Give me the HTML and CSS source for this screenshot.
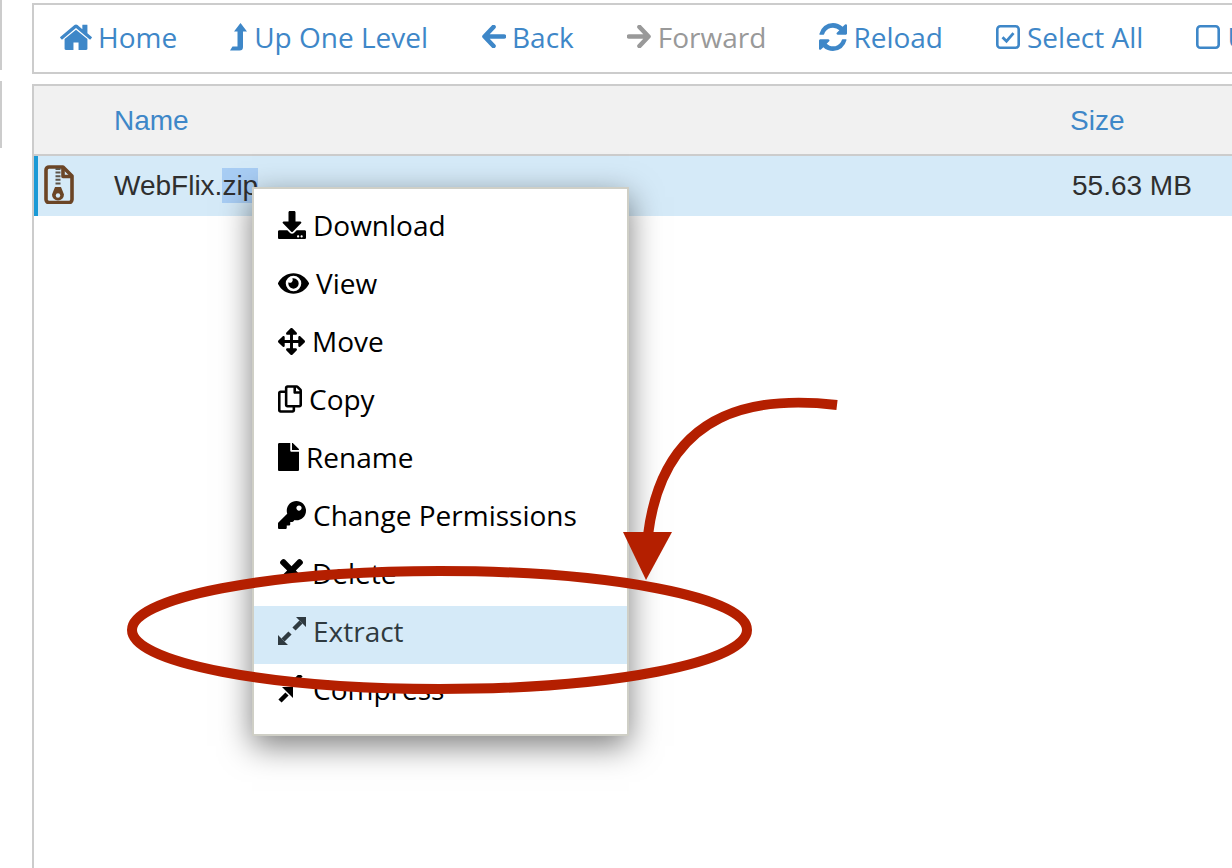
FILE: index.html
```html
<!DOCTYPE html>
<html lang="en">
<head>
<meta charset="utf-8">
<title>File Manager</title>
<link rel="stylesheet" href="styles.css">
</head>
<body>
<div class="page">
  <aside class="rail">
    <div class="stub stub-a"></div>
    <div class="stub stub-b"></div>
  </aside>
  <main class="main">
    <nav class="toolbar">
      <a class="tool"><svg class="ti ti-home" viewBox="96 224 1600 1312"><path d="M1472 992v480q0 26-19 45t-45 19h-384v-384h-256v384h-384q-26 0-45-19t-19-45v-480q0-1 .5-3t.5-3l575-474 575 474q1 2 1 6zm223-69l-62 74q-8 9-21 11h-3q-13 0-21-7l-692-577-692 577q-12 8-24 7-13-2-21-11l-62-74q-8-10-7-23.5t11-21.5l719-599q32-26 76-26t76 26l244 204v-195q0-14 9-23t23-9h192q14 0 23 9t9 23v408l219 182q10 8 11 21.5t-7 23.5z"/></svg>Home</a>
      <a class="tool"><svg class="ti ti-up" viewBox="0 0 17 28"><path d="M10.500 0l6.500 8.500h-4V24q0 3.500-3.500 3.500H0L2.500 23.500H7.500V8.500H4z"/></svg>Up One Level</a>
      <a class="tool"><svg class="ti ti-arrow" viewBox="0 0 25 23"><path class="arrow-line" d="M23 11.500H4M12.500 2L3.500 11.500l9 9.500"/></svg>Back</a>
      <a class="tool tool-off"><svg class="ti ti-arrow" viewBox="0 0 25 23"><path class="arrow-line" d="M2 11.500H21M12.500 2l9 9.500-9 9.500"/></svg>Forward</a>
      <a class="tool"><svg class="ti ti-reload" viewBox="128 128 1536 1536"><path d="M1639 1056q0 5-1 7-64 268-268 434.5t-478 166.5q-146 0-282.5-55t-243.5-157l-129 129q-19 19-45 19t-45-19-19-45v-448q0-26 19-45t45-19h448q26 0 45 19t19 45-19 45l-137 137q71 66 161 102t187 36q134 0 250-65t186-179q11-17 53-117 8-23 30-23h192q13 0 22.5 9.5t9.5 22.5zm25-800v448q0 26-19 45t-45 19h-448q-26 0-45-19t-19-45 19-45l138-138q-148-137-349-137-134 0-250 65t-186 179q-11 17-53 117-8 23-30 23h-199q-13 0-22.5-9.5t-9.5-22.5v-7q65-268 270-434.5t480-166.5q146 0 284 55.5t245 156.5l130-129q19-19 45-19t45 19 19 45z"/></svg>Reload</a>
      <a class="tool"><svg class="ti ti-box" viewBox="0 0 24 24"><rect class="box-line" x="1.300" y="1.300" width="21.400" height="21.400" rx="3"/><path class="check-line" d="M6.500 12.200l4 4 7-8"/></svg>Select All</a>
      <a class="tool"><svg class="ti ti-box" viewBox="0 0 24 24"><rect class="box-line" x="1.300" y="1.300" width="21.400" height="21.400" rx="3"/></svg>Unselect All</a>
    </nav>
    <section class="files">
      <header class="files-head">
        <span class="col-icon"></span>
        <span class="col-name">Name</span>
        <span class="col-size">Size</span>
      </header>
      <div class="file-row">
        <span class="col-icon">
          <svg class="zip" viewBox="0 0 30 39">
            <path class="zip-line" d="M5 2h14l9 9v23.500a3 3 0 0 1-3 3H5a3 3 0 0 1-3-3V5a3 3 0 0 1 3-3z"/>
            <path class="zip-line" d="M19 2.500v9h9"/>
            <path class="zip-teeth" d="M14 3v18"/>
            <path class="zip-pull" d="M11 22h6l3 7.500a6 6 0 1 1-12 0z"/>
            <circle class="zip-hole" cx="14" cy="30.500" r="2.200"/>
          </svg>
        </span>
        <span class="col-name">WebFlix.<span class="selected">zip</span></span>
        <span class="col-size">55.63 MB</span>
      </div>
    </section>
  </main>
</div>

<div class="menu">
  <a class="item"><svg class="mi mi-download" viewBox="0 0 512 512"><path d="M216 0h80c13.300 0 24 10.700 24 24v168h87.700c17.800 0 26.700 21.500 14.100 34.100L269.700 378.300c-7.500 7.500-19.800 7.500-27.300 0L90.100 226.100c-12.600-12.600-3.700-34.100 14.100-34.100H192V24c0-13.300 10.700-24 24-24zm296 376v112c0 13.300-10.700 24-24 24H24c-13.300 0-24-10.700-24-24V376c0-13.300 10.700-24 24-24h146.700l49 49c20.100 20.100 52.500 20.100 72.600 0l49-49H488c13.300 0 24 10.700 24 24zm-124 88c0-11-9-20-20-20s-20 9-20 20 9 20 20 20 20-9 20-20zm64 0c0-11-9-20-20-20s-20 9-20 20 9 20 20 20 20-9 20-20z"/></svg>Download</a>
  <a class="item"><svg class="mi mi-eye" viewBox="0 64 576 384"><path d="M572.520 241.400C518.290 135.590 410.930 64 288 64S57.680 135.640 3.480 241.410a32.350 32.350 0 0 0 0 29.190C57.710 376.410 165.070 448 288 448s230.320-71.640 284.520-177.410a32.350 32.350 0 0 0 0-29.190zM288 400a144 144 0 1 1 144-144 143.930 143.930 0 0 1-144 144zm0-240a95.310 95.310 0 0 0-25.310 3.790 47.850 47.850 0 0 1-66.900 66.900A95.780 95.780 0 1 0 288 160z"/></svg>View</a>
  <a class="item"><svg class="mi mi-move" viewBox="0 0 512 512"><path d="M352.201 425.775l-79.196 79.196c-9.373 9.373-24.568 9.373-33.941 0l-79.196-79.196c-15.119-15.119-4.411-40.971 16.971-40.970h51.162L228 284H127.196v51.162c0 21.382-25.851 32.090-40.971 16.971L7.029 272.937c-9.373-9.373-9.373-24.569 0-33.941L86.225 159.800c15.119-15.119 40.971-4.411 40.971 16.971V228H228V127.196h-51.230c-21.382 0-32.090-25.851-16.971-40.971l79.196-79.196c9.373-9.373 24.568-9.373 33.941 0l79.196 79.196c15.119 15.119 4.411 40.971-16.971 40.971h-51.162V228h100.804v-51.162c0-21.382 25.851-32.090 40.970-16.971l79.196 79.196c9.373 9.373 9.373 24.569 0 33.941L425.773 352.200c-15.119 15.119-40.971 4.411-40.970-16.971V284H284v100.804h51.230c21.382 0 32.090 25.851 16.971 40.971z"/></svg>Move</a>
  <a class="item"><svg class="mi mi-copy" viewBox="0 0 448 512"><path d="M433.941 65.941l-51.882-51.882A48 48 0 0 0 348.118 0H176c-26.510 0-48 21.490-48 48v48H48c-26.510 0-48 21.490-48 48v320c0 26.510 21.490 48 48 48h224c26.510 0 48-21.490 48-48v-48h80c26.510 0 48-21.490 48-48V99.882a48 48 0 0 0-14.059-33.941zM266 464H54a6 6 0 0 1-6-6V150a6 6 0 0 1 6-6h74v224c0 26.510 21.490 48 48 48h96v42a6 6 0 0 1-6 6zm128-96H182a6 6 0 0 1-6-6V54a6 6 0 0 1 6-6h106v88c0 13.255 10.745 24 24 24h88v202a6 6 0 0 1-6 6zm6-256h-64V48h9.632c1.591 0 3.117.632 4.243 1.757l48.368 48.368a6 6 0 0 1 1.757 4.243V112z"/></svg>Copy</a>
  <a class="item"><svg class="mi mi-file" viewBox="0 0 384 512"><path d="M224 136V0H24C10.700 0 0 10.700 0 24v464c0 13.300 10.700 24 24 24h336c13.300 0 24-10.700 24-24V160H248c-13.200 0-24-10.800-24-24zm160-14.100v6.100H256V0h6.100c6.400 0 12.500 2.500 17 7l97.900 98c4.500 4.500 7 10.600 7 16.900z"/></svg>Rename</a>
  <a class="item"><svg class="mi mi-key" viewBox="0 0 512 512"><path d="M512 176.001C512 273.203 433.202 352 336 352c-11.220 0-22.190-1.062-32.827-3.069l-24.012 27.014A23.999 23.999 0 0 1 261.223 384H224v40c0 13.255-10.745 24-24 24h-40v40c0 13.255-10.745 24-24 24H24c-13.255 0-24-10.745-24-24v-78.059c0-6.365 2.529-12.470 7.029-16.971l161.802-161.802C163.108 213.814 160 195.271 160 176 160 78.798 238.797.001 335.999 0 433.488-.001 512 78.511 512 176.001zM336 128c0 26.510 21.490 48 48 48s48-21.490 48-48-21.490-48-48-48-48 21.490-48 48z"/></svg>Change Permissions</a>
  <a class="item"><svg class="mi mi-times" viewBox="0 80 352 352"><path d="M242.720 256l100.070-100.070c12.280-12.280 12.280-32.190 0-44.480l-22.240-22.240c-12.280-12.280-32.190-12.280-44.480 0L176 189.280 75.930 89.210c-12.280-12.280-32.190-12.280-44.480 0L9.210 111.450c-12.280 12.280-12.280 32.190 0 44.480L109.280 256 9.210 356.070c-12.280 12.280-12.280 32.190 0 44.480l22.240 22.240c12.280 12.280 32.200 12.280 44.480 0L176 322.720l100.070 100.070c12.280 12.280 32.200 12.280 44.480 0l22.240-22.240c12.280-12.280 12.280-32.190 0-44.480L242.720 256z"/></svg>Delete</a>
  <a class="item item-on"><svg class="mi mi-expand" viewBox="0 0 28 28"><path class="arrow-fill" d="M0 28V18l10 10zM28 0v10L18 0z"/><path class="diag" d="M5 23l7-7M23 5l-7 7"/></svg>Extract</a>
  <a class="item"><svg class="mi mi-expand" viewBox="0 0 28 28"><path class="arrow-fill" d="M15 12v11L4 12z"/><path class="diag" d="M2 26l7-7M23 0l-6 6"/></svg>Compress</a>
</div>

<svg class="markup" viewBox="0 0 1232 868">
  <ellipse class="mark-line" cx="439.500" cy="630" rx="307.500" ry="59"/>
  <path class="mark-line" d="M837 405C760 396 664 406 648 535"/>
  <path class="mark-fill" d="M623 532h49l-26 48z"/>
</svg>
</body>
</html>
```
FILE: styles.css
```css
* { box-sizing: border-box; }

html, body {
  margin: 0;
  height: 100%;
  overflow: hidden;
  background: #fff;
}

.page {
  display: flex;
  width: 1232px;
  height: 868px;
  overflow: hidden;
}

/* left rail: only the edges of two buttons are visible */
.rail {
  flex: 0 0 32px;
  display: flex;
  flex-direction: column;
  gap: 11px;
}

.stub {
  width: 2px;
  background: #fff;
  border-right: 2px solid #ccc;
}

.stub-a { height: 70px; }
.stub-b { height: 67px; }

.main {
  flex: 1;
  min-width: 0;
  padding-top: 3px;
  display: flex;
  flex-direction: column;
  gap: 10px;
}

.toolbar {
  display: flex;
  align-items: center;
  gap: 53px;
  height: 71px;
  padding: 0 0 4px 26px;
  border: 2px solid #ccc;
  border-right: 0;
  overflow: hidden;
  white-space: nowrap;
  font: 28px/1 "Open Sans", sans-serif;
}

.tool {
  display: flex;
  align-items: center;
  gap: 6px;
  flex: none;
  color: #3e87c8;
}

.tool-off { color: #999; }

.ti { display: block; flex: none; fill: currentColor; }
.ti-home { width: 32px; height: 26px; }
.ti-up { width: 17px; height: 28px; margin-right: 1px; }
.ti-arrow { width: 25px; height: 23px; }
.ti-reload { width: 28px; height: 28px; }
.ti-box { width: 24px; height: 24px; margin-right: 1px; }

.arrow-line {
  fill: none;
  stroke: currentColor;
  stroke-width: 4.600;
  stroke-linecap: round;
  stroke-linejoin: round;
}

.box-line { fill: none; stroke: currentColor; stroke-width: 2.600; }
.check-line { fill: none; stroke: currentColor; stroke-width: 2.800; }

.files {
  flex: 1;
  border-left: 2px solid #ccc;
  border-top: 2px solid #ccc;
  font: 28px/1 "Liberation Sans", Arial, sans-serif;
}

.files-head {
  display: flex;
  align-items: center;
  height: 70px;
  padding-top: 2px;
  background: #f1f1f1;
  border-bottom: 2px solid #ccc;
  color: #3e87c8;
}

.file-row {
  display: flex;
  align-items: center;
  height: 60px;
  background: #d5eaf8;
  border-left: 4px solid #1b9ad6;
  color: #2f2f2f;
}

.col-icon { flex: none; width: 80px; }
.col-name { flex: none; width: 956px; }
.file-row .col-icon { width: 76px; padding-left: 6px; }
.col-size { flex: none; }
.file-row .col-size { margin-left: 2px; }

.selected {
  background: #a8cdf4;
  padding: 2px 0;
}

.zip { display: block; width: 30px; height: 39px; margin-top: -4px; }
.zip-line { fill: none; stroke: #6b4526; stroke-width: 3.600; stroke-linejoin: round; }
.zip-teeth { fill: none; stroke: #5c5348; stroke-width: 5; stroke-dasharray: 2 1.600; }
.zip-pull { fill: #6b4526; }
.zip-hole { fill: #d5eaf8; }

/* context menu */
.menu {
  position: absolute;
  left: 252px;
  top: 187px;
  width: 377px;
  height: 549px;
  padding: 11px 0 0;
  background: #fff;
  border: 2px solid #cfcfc6;
  box-shadow: 0 10px 30px rgba(0, 0, 0, .5);
  font: 28px/1 "Open Sans", sans-serif;
  color: #000;
}

.item {
  display: flex;
  align-items: center;
  gap: 7px;
  height: 58px;
  padding: 0 0 8px 24px;
}

.item-on {
  background: #d5eaf8;
  color: #2f3a40;
}

.mi { display: block; flex: none; fill: currentColor; }
.mi-download { width: 28px; height: 28px; }
.mi-eye { width: 31px; height: 21px; }
.mi-move { width: 27px; height: 27px; }
.mi-copy { width: 24px; height: 28px; }
.mi-file { width: 21px; height: 28px; }
.mi-key { width: 28px; height: 28px; }
.mi-times { width: 23px; height: 23px; margin: -6px 2px 0 2px; }
.mi-expand { width: 28px; height: 28px; }

.diag { fill: none; stroke: currentColor; stroke-width: 4.500; }

/* hand-drawn annotation over the screenshot */
.markup {
  position: absolute;
  left: 0;
  top: 0;
  width: 1232px;
  height: 868px;
  pointer-events: none;
}

.mark-line { fill: none; stroke: #b41f00; stroke-width: 10; }
.mark-fill { fill: #b41f00; }
```
